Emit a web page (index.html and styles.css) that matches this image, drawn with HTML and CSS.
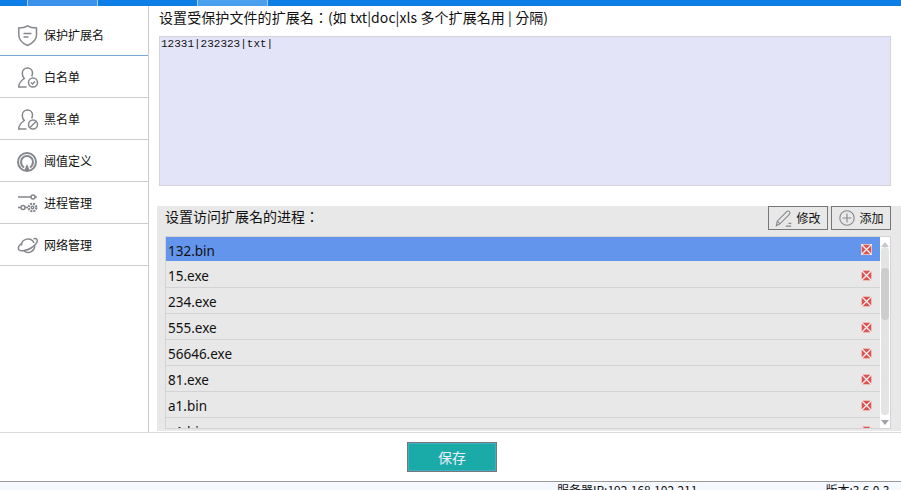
FILE: index.html
```html
<!DOCTYPE html>
<html lang="zh-CN">
<head>
    <meta charset="UTF-8">
    <title>保护扩展名</title>
    <link rel="stylesheet" href="styles.css">
</head>
<body>

    <!-- Top tabs -->
    <div class="top-bar">
        <div class="top-tab tab-first"></div>
        <div class="top-tab tab-second"></div>
    </div>

    <div class="content">
        <!-- Side menu -->
        <div class="side-menu">
            <div class="menu-item menu-first">
                <svg class="menu-icon" viewBox="0 0 22 24"><path d="M10.500 2.800C13 4.500 16 5 19.500 5v7c0 5-4.500 8.500-9 10.500C6 20.500 1.800 17 1.800 12V5C5 5 8 4.500 10.500 2.800z"/><path d="M6.500 10.500h8M6.500 14h5"/></svg>
                <span>保护扩展名</span>
            </div>
            <div class="menu-item">
                <svg class="menu-icon" viewBox="0 0 22 24"><path d="M9.500 22H1.800c0-4 2.500-6.500 5.500-8.500-1.500-1.500-2-3-2-5 0-3.200 2.200-5.400 5.200-5.400s5 2.200 5 5c0 1.200-.3 2.200-.8 3.200"/><circle cx="16" cy="17.500" r="4.500"/><path d="M14 17.500l1.500 1.500 2.500-2.500"/></svg>
                <span>白名单</span>
            </div>
            <div class="menu-item">
                <svg class="menu-icon" viewBox="0 0 22 24"><path d="M9.500 22H1.800c0-4 2.500-6.500 5.500-8.500-1.500-1.500-2-3-2-5 0-3.200 2.200-5.400 5.200-5.400s5 2.200 5 5c0 1.200-.3 2.200-.8 3.200"/><circle cx="16" cy="17.500" r="4.500"/><path d="M13 20.500l6-6"/></svg>
                <span>黑名单</span>
            </div>
            <div class="menu-item">
                <svg class="menu-icon" viewBox="0 0 22 24"><circle cx="10" cy="13" r="9" stroke-width="2"/><path d="M7 18.500C5 17 4 15.200 4 13c0-3.300 2.700-6 6-6s6 2.700 6 6c0 2.200-1 4-3 5.500" stroke-width="2"/><path class="icon-fill" d="M10 15l3 7H7z"/></svg>
                <span>阈值定义</span>
            </div>
            <div class="menu-item">
                <svg class="menu-icon" viewBox="0 0 22 24"><path d="M1 6h13M18 6h2M1 16.500h3M8 16.500h3"/><circle cx="16" cy="6" r="2"/><circle cx="6" cy="16.500" r="2"/><circle cx="15.500" cy="16.500" r="3.800" stroke-width="2.200" stroke-dasharray="2 1"/><circle cx="15.500" cy="16.500" r="1.300"/></svg>
                <span>进程管理</span>
            </div>
            <div class="menu-item">
                <svg class="menu-icon" viewBox="0 0 22 24"><path d="M4.500 12.500a6.500 6.500 0 0 1 12.500-2.500"/><path d="M5 10C2 12 .5 15 2 17c2 1.500 8 .5 12-2s7-6 6-8.500c-.5-1-2-1.200-3.500-.8"/><path d="M7 18a6.500 6.500 0 0 0 10.500-6"/></svg>
                <span>网络管理</span>
            </div>
        </div>

        <!-- Main panel -->
        <div class="main-panel">
            <div class="ext-label" lang="zh-TW">设置受保护文件的扩展名：(如 txt|doc|xls 多个扩展名用 | 分隔)</div>
            <textarea class="ext-input" spellcheck="false">12331|232323|txt|</textarea>

            <div class="process-section">
                <div class="process-head">
                    <span lang="zh-TW">设置访问扩展名的进程：</span>
                    <div class="head-btns">
                        <button class="tool-btn">
                            <svg class="tool-icon" viewBox="0 0 20 20"><path d="M1.500 18.500l1-5L13 3c1-1 2-1 3 0s1 2 0 3L5.500 16.500zM2.500 13.500l3 3M12 19h6M15 16h3"/></svg>
                            <span>修改</span>
                        </button>
                        <button class="tool-btn">
                            <svg class="tool-icon" viewBox="0 0 20 20"><circle cx="10" cy="10" r="8"/><path d="M10 5v10M5 10h10"/></svg>
                            <span>添加</span>
                        </button>
                    </div>
                </div>

                <div class="process-box">
                    <div class="process-list" id="process-list"></div>
                    <div class="scroll-bar">
                        <div class="scroll-arrow arrow-up"></div>
                        <div class="scroll-track">
                            <div class="scroll-thumb"></div>
                        </div>
                        <div class="scroll-arrow arrow-down"></div>
                    </div>
                </div>
            </div>
        </div>
    </div>

    <!-- Save -->
    <div class="save-bar">
        <button class="save-btn">保存</button>
    </div>

    <!-- Status -->
    <div class="status-bar">
        <span class="status-ip">服务器IP:192.168.102.211</span>
        <span class="status-ver">版本:3.6.0.3</span>
    </div>

    <script>
        const processes = ['132.bin', '15.exe', '234.exe', '555.exe', '56646.exe', '81.exe', 'a1.bin', 'a1.bin'];

        const list = document.getElementById('process-list');
        processes.forEach((name, index) => {
            const row = document.createElement('div');
            row.className = index === 0 ? 'process-row selected' : 'process-row';
            row.innerHTML = `<span>${name}</span>
                <svg class="del-icon" viewBox="0 0 11 11"><rect width="11" height="11"/><path d="M.5 .5l10 10M10.500 .5l-10 10"/></svg>`;
            list.appendChild(row);
        });
    </script>
</body>
</html>
```

FILE: styles.css
```css
* {
    box-sizing: border-box;
}
html, body {
    margin: 0;
    height: 490px;
    overflow: hidden;
}
body {
    font-family: "Noto Sans CJK SC", "Noto Sans", sans-serif;
    background-color: white;
    color: #111;
}
.top-bar {
    display: flex;
    height: 6px;
    background-color: #0c7ee6;
}
.top-tab {
    width: 71px;
    border-left: 1px solid #a8cdf2;
    border-right: 1px solid #a8cdf2;
}
.tab-first {
    margin-left: 27px;
    background-color: #3a92ea;
}
.tab-second {
    margin-left: 99px;
    background-color: #4a9fee;
}
.content {
    display: flex;
    height: 426px;
}

/* side menu */
.side-menu {
    width: 149px;
    border-right: 1px solid #ccc;
}
.menu-item {
    display: flex;
    align-items: center;
    height: 42px;
    padding: 1px 0 0 17px;
    gap: 5px;
    font-size: 12px;
    border-bottom: 1px solid #ccc;
}
.menu-item span {
    margin-bottom: 2px;
}
.menu-first {
    height: 50px;
    padding-top: 9px;
    border-bottom-color: #7aa7d6;
}
.menu-icon {
    width: 22px;
    height: 24px;
    fill: none;
    stroke: #85878c;
    stroke-width: 1.500;
}
.icon-fill {
    fill: #85878c;
    stroke: none;
}

/* main panel */
.main-panel {
    flex: 1;
    display: flex;
    flex-direction: column;
    padding-left: 8px;
}
.ext-label {
    height: 30px;
    padding: 1px 0 0 2px;
    font-family: "Noto Sans CJK TC", sans-serif;
    font-size: 14px;
    letter-spacing: .08px;
    line-height: 20px;
    white-space: nowrap;
}
.ext-input {
    display: block;
    width: 732px;
    height: 150px;
    margin-left: 2px;
    padding: 1px 1px;
    border: 1px solid #d4d4d8;
    border-radius: 0;
    outline: none;
    resize: none;
    background-color: #e4e4f8;
    font-family: "Liberation Mono", monospace;
    font-size: 11px;
    color: #111;
}
.process-section {
    height: 225px;
    margin-top: 20px;
    padding: 0 10px 2px 8px;
    background-color: #e8e8e8;
    display: flex;
    flex-direction: column;
}
.process-head {
    display: flex;
    justify-content: space-between;
    height: 30px;
    font-family: "Noto Sans CJK TC", sans-serif;
    font-size: 14px;
    line-height: 21px;
}
.head-btns {
    display: flex;
    gap: 3px;
    height: 24px;
}
.tool-btn {
    display: flex;
    align-items: center;
    justify-content: center;
    gap: 3px;
    width: 60px;
    height: 24px;
    padding: 0;
    border: 1px solid #777;
    background-color: #e8e8e8;
    font-family: "Noto Sans CJK SC", sans-serif;
    font-size: 12px;
    color: #111;
}
.tool-btn span {
    margin-bottom: 2px;
}
.tool-icon {
    width: 18px;
    height: 18px;
    fill: none;
    stroke: #85878c;
    stroke-width: 1.200;
}
.process-box {
    flex: 1;
    display: flex;
    min-height: 0;
    border: 1px solid #d4d4d4;
}
.process-list {
    flex: 1;
    overflow: hidden;
    font-family: "Noto Sans", sans-serif;
    font-size: 13.500px;
}
.process-row {
    display: flex;
    align-items: center;
    justify-content: space-between;
    height: 26px;
    padding: 1px 8px 0 2px;
    border-bottom: 1px solid #d4d4d4;
}
.process-row span {
    margin-top: 2px;
}
.process-row.selected {
    height: 25px;
    background-color: #6495ed;
    border-bottom-color: #e8e8e8;
}
.del-icon {
    width: 11px;
    height: 11px;
    fill: #d9534f;
    stroke: #f8f2f2;
    stroke-width: 1.300;
}

/* scroll bar */
.scroll-bar {
    display: flex;
    flex-direction: column;
    width: 10px;
    background-color: white;
}
.scroll-arrow {
    height: 10px;
    display: flex;
    justify-content: center;
}
.arrow-up::before, .arrow-down::before {
    content: "";
    border-left: 4px solid transparent;
    border-right: 4px solid transparent;
}
.arrow-up::before {
    margin-top: 3px;
    border-bottom: 5px solid #c4c8cc;
}
.arrow-down {
    height: 13px;
}
.arrow-down::before {
    margin-top: 5px;
    border-top: 5px solid #a0a4a8;
}
.scroll-track {
    flex: 1;
    margin: 0 1px;
    background-color: #e4e4e4;
    border-radius: 4px;
}
.scroll-thumb {
    height: 52px;
    margin-top: 21px;
    background-color: #cdcdcd;
    border-radius: 4px;
}

/* save */
.save-bar {
    display: flex;
    justify-content: center;
    align-items: center;
    height: 49px;
    padding-left: 3px;
    border-top: 1px solid #dcdcdc;
}
.save-btn {
    width: 90px;
    height: 30px;
    padding: 0;
    border: 1px solid #777;
    outline: 1px solid #3fb0c4;
    outline-offset: -2px;
    background-color: #1aaba8;
    font-family: inherit;
    font-size: 14px;
    color: #eef;
}

/* status */
.status-bar {
    display: flex;
    height: 9px;
    overflow: hidden;
    padding-left: 557px;
    border-top: 1px solid #999;
    background-color: #f5f8ff;
    font-size: 12px;
    line-height: 16px;
    white-space: nowrap;
}
.status-ver {
    margin-left: 128px;
}
```
